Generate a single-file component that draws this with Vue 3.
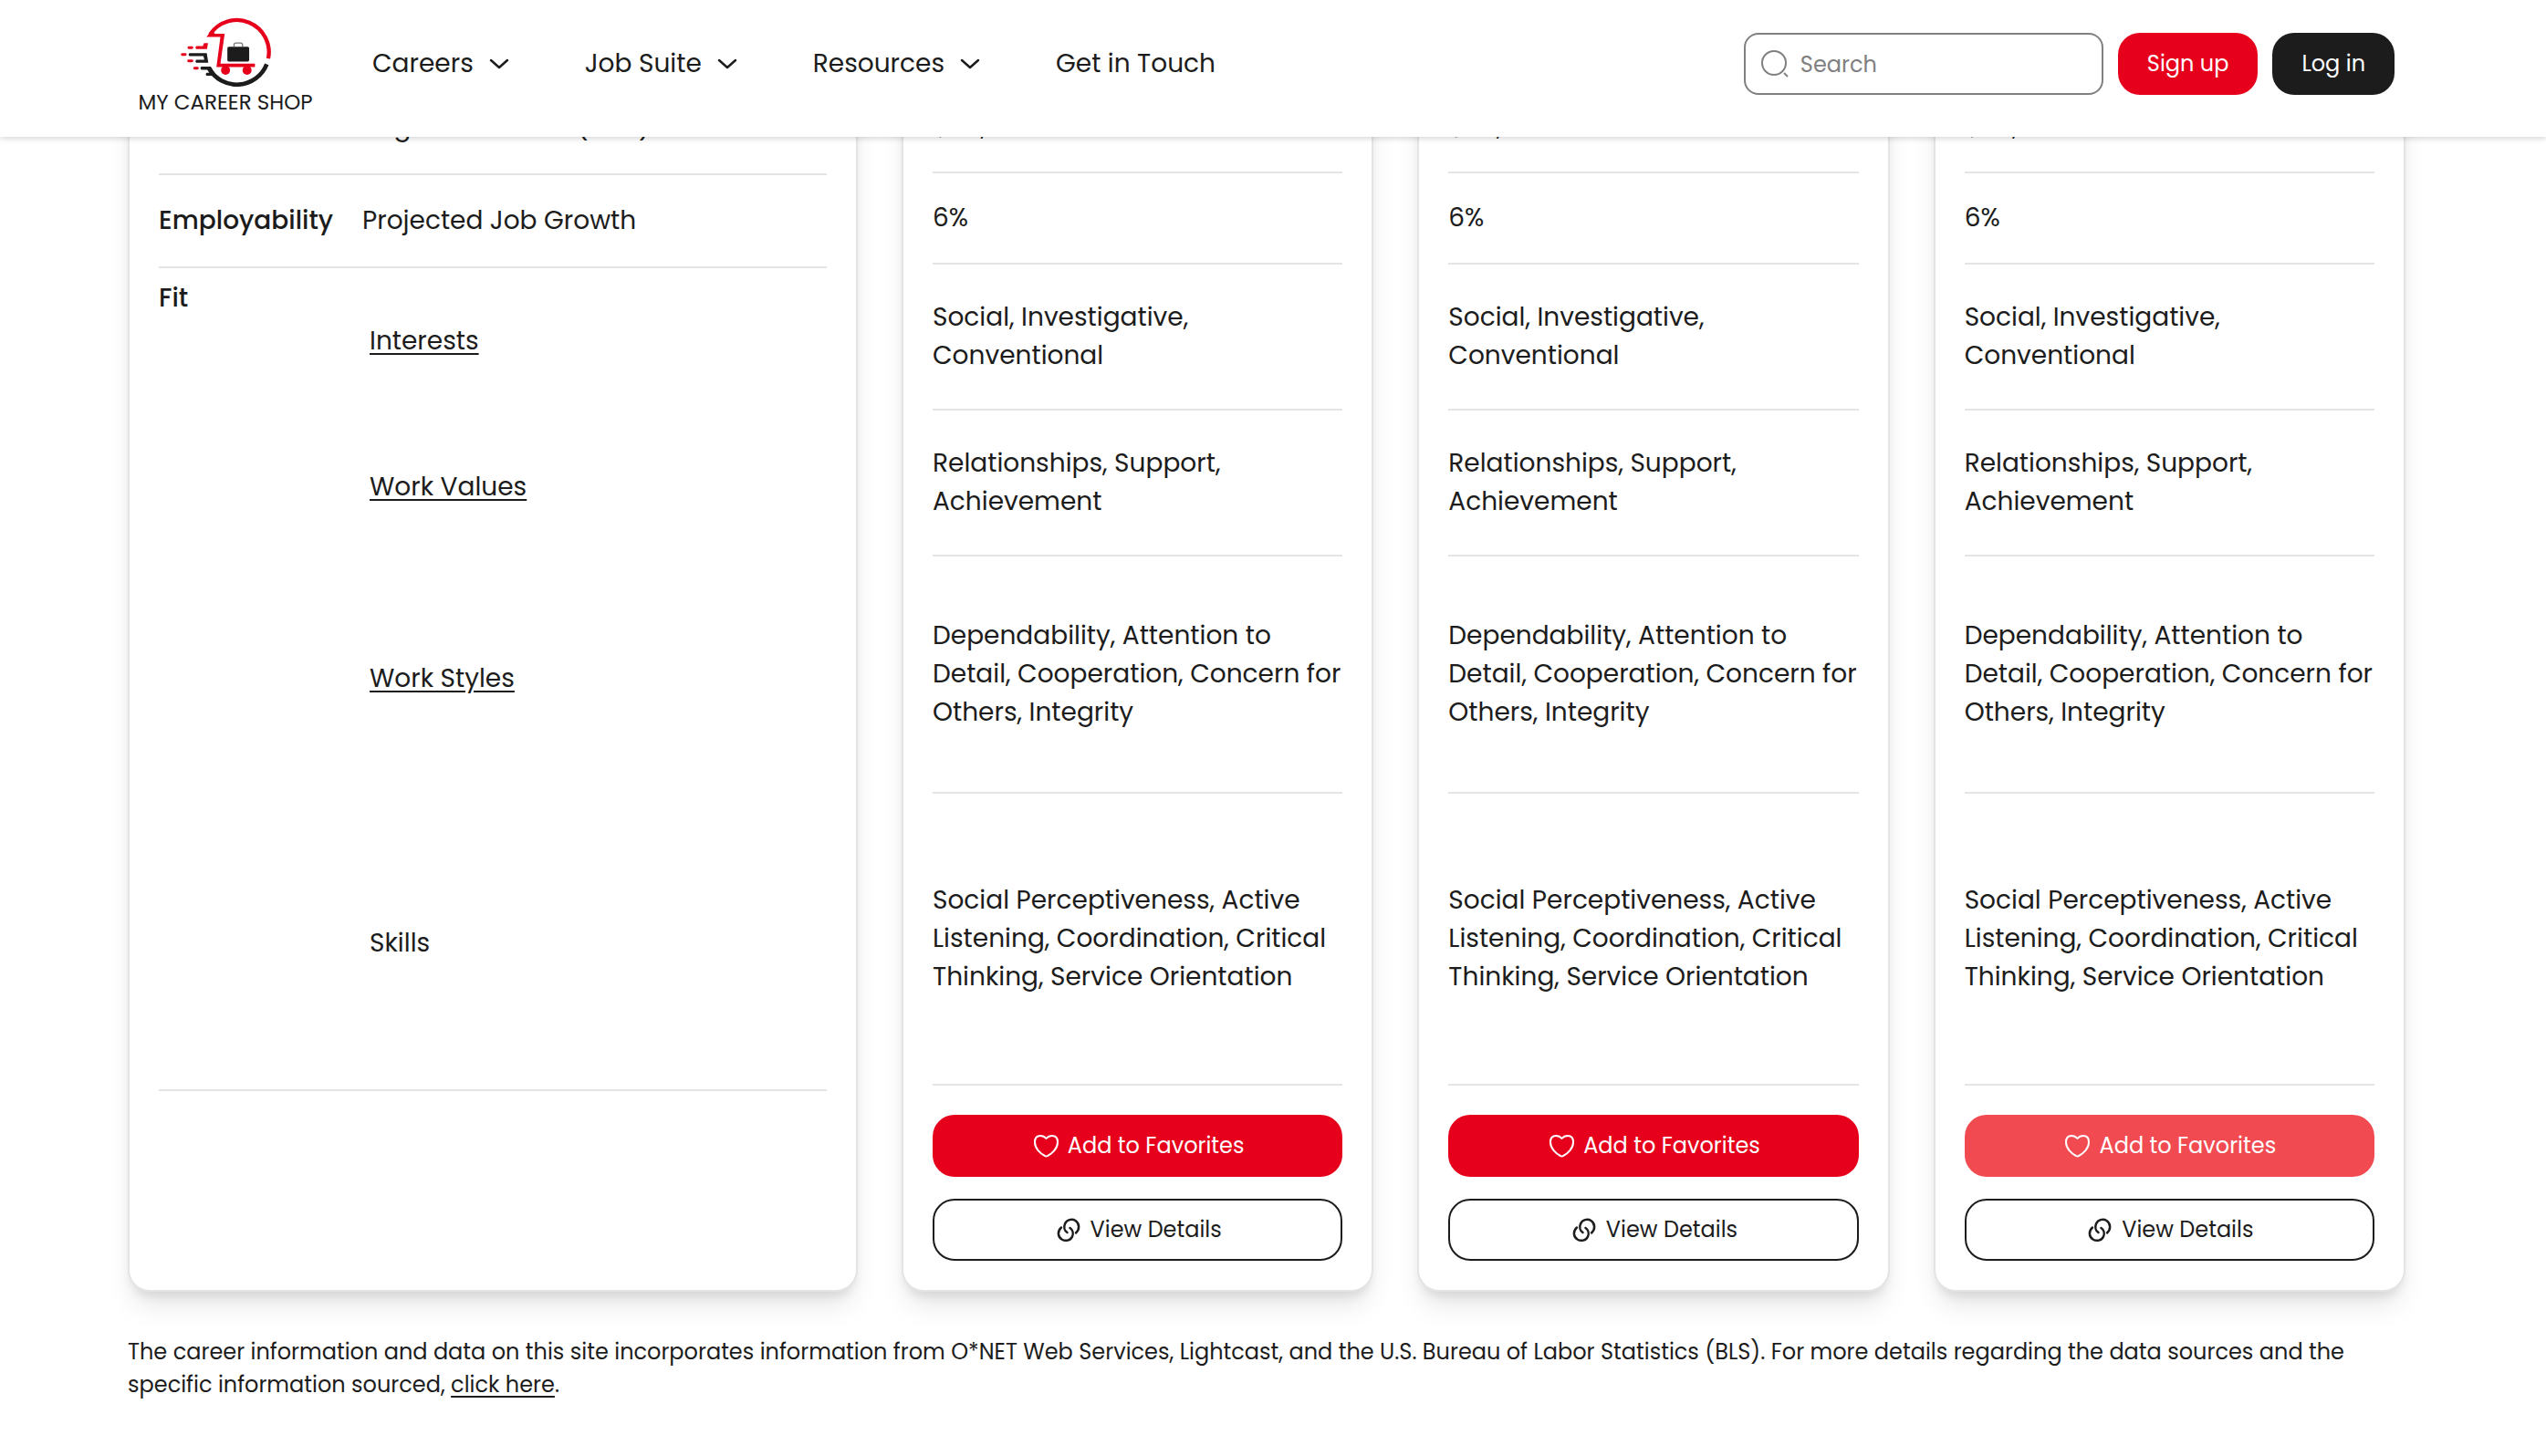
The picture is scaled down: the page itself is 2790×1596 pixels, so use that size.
<script setup>
const menu = [
  { label: 'Careers', hasMenu: true },
  { label: 'Job Suite', hasMenu: true },
  { label: 'Resources', hasMenu: true },
  { label: 'Get in Touch', hasMenu: false },
]

const fitRows = [
  { label: 'Interests', link: true, size: 'two' },
  { label: 'Work Values', link: true, size: 'two' },
  { label: 'Work Styles', link: true, size: 'three' },
  { label: 'Skills', link: false, size: 'four' },
]

const values = [
  { size: 'one', text: '$58,560' },
  { size: 'one', text: '6%' },
  { size: 'two', text: 'Social, Investigative, Conventional' },
  { size: 'two', text: 'Relationships, Support, Achievement' },
  { size: 'three', text: 'Dependability, Attention to Detail, Cooperation, Concern for Others, Integrity' },
  { size: 'four', text: 'Social Perceptiveness, Active Listening, Coordination, Critical Thinking, Service Orientation' },
]

const careers = [
  { id: 1, values, pending: false },
  { id: 2, values, pending: false },
  { id: 3, values, pending: true },
]
</script>

<template>
  <div class="page">
    <header class="topbar">
      <a class="logo" href="#" aria-label="My Career Shop home">
        <svg class="logo-mark" viewBox="167 25 310 235" fill="none" aria-hidden="true">
          <path d="M270 84A106 106 0 0 1 462 164" stroke="#e6001b" stroke-width="13" />
          <path d="M258 93L274 72L286 82H318L304 181H418V192H291L304 93Z" fill="#e6001b" />
          <path d="M457 183A106 106 0 0 1 266 196" stroke="#1c1c1c" stroke-width="14" />
          <circle cx="321" cy="203" r="15" fill="#e6001b" />
          <circle cx="392" cy="203" r="15" fill="#e6001b" />
          <rect x="327" y="125" width="72" height="49" rx="5" fill="#1c1c1c" />
          <path d="M349 125V119Q349 113 355 113H371Q377 113 377 119V125" stroke="#777" stroke-width="4" />
          <path d="M200 128H210M178 151H188M199 172H210M219 196H228" stroke="#e6001b" stroke-width="9" stroke-linecap="round" />
          <path d="M224 123H246L250 113H263L260 133H224Q219 128 224 123Z" fill="#e6001b" />
          <path d="M202 146H259L264 178H224Q219 173 224 168H251L248 156H202Q196 151 202 146Z" fill="#1c1c1c" />
          <path d="M241 191H272L290 221H258Q253 216 258 211H268L262 201H241Q235 196 241 191Z" fill="#1c1c1c" />
        </svg>
        <span class="logo-text">MY CAREER SHOP</span>
      </a>

      <nav class="menu" aria-label="Main">
        <template v-for="item in menu" :key="item.label">
          <button v-if="item.hasMenu" type="button" class="menu-item">
            {{ item.label }}
            <svg class="chevron" viewBox="0 0 32 32" fill="none" aria-hidden="true">
              <path d="M7 12L16 20L25 12" stroke="currentColor" stroke-width="2.500" stroke-linecap="round" stroke-linejoin="round" />
            </svg>
          </button>
          <a v-else class="menu-item" href="#">{{ item.label }}</a>
        </template>
      </nav>

      <div class="actions">
        <label class="search">
          <svg class="search-icon" viewBox="0 0 32 32" fill="none" aria-hidden="true">
            <circle cx="15" cy="15" r="13" stroke="currentColor" stroke-width="2" />
            <path d="M26 26L30 30" stroke="currentColor" stroke-width="2" />
          </svg>
          <input type="search" placeholder="Search" aria-label="Search" />
        </label>
        <button type="button" class="btn btn-red">Sign up</button>
        <button type="button" class="btn btn-dark">Log in</button>
      </div>
    </header>

    <main class="content">
      <div class="compare">
        <section class="card">
          <div class="row">
            <span class="row-title"></span>
            <span>Avg. Net Income (USD)</span>
          </div>
          <div class="row">
            <span class="row-title">Employability</span>
            <span>Projected Job Growth</span>
          </div>
          <div class="row fit">
            <span class="row-title">Fit</span>
            <div class="fit-list">
              <div v-for="row in fitRows" :key="row.label" class="fit-item" :class="row.size">
                <a v-if="row.link" href="#">{{ row.label }}</a>
                <span v-else>{{ row.label }}</span>
              </div>
            </div>
          </div>
        </section>

        <section v-for="career in careers" :key="career.id" class="card">
          <div v-for="value in career.values" :key="value.text" class="value" :class="value.size">
            <span>{{ value.text }}</span>
          </div>
          <div class="card-actions">
            <button type="button" class="btn btn-red" :class="{ pending: career.pending }">
              <svg class="icon" viewBox="0 0 32 32" fill="none" aria-hidden="true">
                <path d="M16.500 8C14.500 5.500 12 5 10 5C6.500 5 4 7.500 4 12C4 19 10 24.500 15 27C16 27.600 17 27.600 18 27C23 24.500 29 19 29 12C29 7.500 26.500 5 23 5C21 5 18.500 5.500 16.500 8Z" stroke="currentColor" stroke-width="2" stroke-linejoin="round" />
              </svg>
              Add to Favorites
            </button>
            <button type="button" class="btn btn-outline">
              <svg class="icon" viewBox="0 0 32 32" fill="none" aria-hidden="true">
                <path d="M14.500 19C11.500 17 10.500 13 12 9.500C14 5 19.500 3.500 23.500 6C28 9 28.500 15.500 24 19.500" stroke="currentColor" stroke-width="2.500" stroke-linecap="round" />
                <path d="M17.500 14C20.500 16 21.500 20 20 23.500C18 28 12.500 29 8.500 26.500C4 23.500 3.500 17.500 8 13.500" stroke="currentColor" stroke-width="2.500" stroke-linecap="round" />
              </svg>
              View Details
            </button>
          </div>
        </section>
      </div>

      <p class="note">
        The career information and data on this site incorporates information from O*NET Web Services, Lightcast, and the U.S. Bureau of Labor Statistics (BLS). For more details regarding the data sources and the specific information sourced, <a href="#">click here</a>.
      </p>
    </main>
  </div>
</template>

<style>
body {
  margin: 0;
  background: #fff;
}
</style>

<style scoped>
.page {
  font-family: Poppins, Inter, "Liberation Sans", sans-serif;
  font-size: 28px;
  line-height: 42px;
  color: #1c1c1c;
}

.page *,
.page *::before {
  box-sizing: border-box;
}

a {
  color: inherit;
}

button,
input {
  font-family: inherit;
  color: inherit;
}

.topbar {
  position: relative;
  z-index: 2;
  display: flex;
  align-items: flex-start;
  height: 150px;
  padding: 0 166px 0 150px;
  background: #fff;
  box-shadow: 0 2px 6px rgba(0, 0, 0, 0.16);
}

.logo {
  display: flex;
  flex-direction: column;
  align-items: center;
  width: 194px;
  padding-top: 18px;
  text-decoration: none;
}

.logo-mark {
  width: 103px;
  height: 78px;
}

.logo-text {
  font-size: 23px;
  line-height: 32px;
  white-space: nowrap;
}

.menu {
  display: flex;
  gap: 78px;
  padding: 49px 0 0 64px;
}

.menu-item {
  display: flex;
  align-items: center;
  gap: 12px;
  padding: 0;
  border: 0;
  background: none;
  font-size: 28px;
  line-height: 42px;
  text-decoration: none;
  white-space: nowrap;
}

.chevron {
  width: 32px;
  height: 32px;
}

.actions {
  display: flex;
  gap: 16px;
  margin-left: auto;
  padding-top: 36px;
}

.search {
  display: flex;
  align-items: center;
  gap: 12px;
  width: 394px;
  height: 68px;
  padding: 0 16px;
  border: 2px solid #808080;
  border-radius: 16px;
  color: #808080;
}

.search-icon {
  flex: none;
  width: 32px;
  height: 32px;
}

.search input {
  flex: 1;
  min-width: 0;
  padding: 0;
  border: 0;
  outline: 0;
  background: none;
  font-size: 24px;
}

.search input::placeholder {
  color: #808080;
  opacity: 1;
}

.btn {
  display: flex;
  align-items: center;
  justify-content: center;
  gap: 8px;
  height: 68px;
  padding: 0 32px;
  border: 0;
  border-radius: 24px;
  font-size: 24px;
  line-height: 36px;
  white-space: nowrap;
}

.btn-red {
  background: #e6001b;
  color: #fff;
}

.btn-red.pending {
  background: #f14b51;
}

.btn-dark {
  background: #1c1c1c;
  color: #fff;
}

.btn-outline {
  border: 2px solid #1c1c1c;
  background: #fff;
}

.icon {
  width: 32px;
  height: 32px;
}

.content {
  padding: 0 154px 0 140px;
}

.compare {
  display: grid;
  grid-template-columns: minmax(0, 2400fr) repeat(3, minmax(0, 1552fr));
  gap: 48px;
  margin-top: -94px;
}

.card {
  padding: 32px;
  border: 2px solid #e4e4e6;
  border-radius: 24px;
  background: #fff;
  box-shadow: 0 20px 30px -6px rgba(0, 0, 0, 0.1), 0 8px 12px -4px rgba(0, 0, 0, 0.1);
}

.row {
  display: flex;
  align-items: center;
  height: 102px;
  border-bottom: 2px solid #e4e4e6;
}

.row-title {
  width: 223px;
  font-weight: 500;
}

.row.fit {
  align-items: flex-start;
  height: auto;
}

.fit .row-title {
  padding-top: 12px;
}

.fit-list {
  padding-left: 8px;
}

.fit-item {
  display: flex;
  align-items: center;
}

.fit-item a {
  text-underline-offset: 4px;
}

.value {
  display: flex;
  align-items: center;
  border-bottom: 2px solid #e4e4e6;
}

.one {
  height: 100px;
}

.two {
  height: 160px;
}

.three {
  height: 260px;
}

.four {
  height: 320px;
}

.card-actions {
  display: flex;
  flex-direction: column;
  gap: 24px;
  padding-top: 32px;
}

.note {
  margin: 48px 0 0;
  font-size: 24px;
  line-height: 36px;
}

.note a {
  text-underline-offset: 4px;
}
</style>
